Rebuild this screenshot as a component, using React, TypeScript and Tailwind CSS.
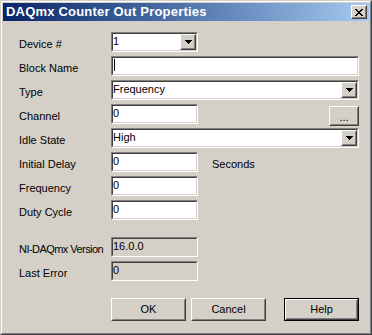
import React from "react";

const FONT = "font-['Liberation_Sans',Arial,sans-serif]";

function Arrow() {
  return (
    <svg width="7" height="4" viewBox="0 0 7 4" shapeRendering="crispEdges">
      <rect x="0" y="0" width="7" height="1" fill="#000" />
      <rect x="1" y="1" width="5" height="1" fill="#000" />
      <rect x="2" y="2" width="3" height="1" fill="#000" />
      <rect x="3" y="3" width="1" height="1" fill="#000" />
    </svg>
  );
}

function CloseGlyph() {
  // classic 8x7 pixel "X"
  const rows = ["11000011", "01100110", "00111100", "00011000", "00111100", "01100110", "11000011"];
  return (
    <svg width="8" height="7" viewBox="0 0 8 7" shapeRendering="crispEdges">
      {rows.map((r, y) =>
        r.split("").map((c, x) => (c === "1" ? <rect key={`${x}-${y}`} x={x} y={y} width="1" height="1" fill="#000" /> : null))
      )}
    </svg>
  );
}

// sunken 3d field
function Field({ width, gray, children }: { width: string; gray?: boolean; children?: React.ReactNode }) {
  return (
    <div className={`${width} h-[20px] border border-t-[#808080] border-l-[#808080] border-b-white border-r-white`}>
      <div className={`h-full flex border border-t-[#404040] border-l-[#404040] border-b-[#D4D0C8] border-r-[#D4D0C8] ${gray ? "bg-[#D4D0C8]" : "bg-white"}`}>
        {children}
      </div>
    </div>
  );
}

function RaisedBox({ className, children }: { className?: string; children?: React.ReactNode }) {
  return (
    <div className={`border border-t-white border-l-white border-b-[#404040] border-r-[#404040] bg-[#D4D0C8] ${className ?? ""}`}>
      <div className="h-full w-full flex items-center justify-center border border-t-[#D4D0C8] border-l-[#D4D0C8] border-b-[#808080] border-r-[#808080]">
        {children}
      </div>
    </div>
  );
}

function Combo({ width, value }: { width: string; value: string }) {
  return (
    <Field width={width}>
      <span className="flex-1 text-[11px] leading-[13px] pt-[1px] text-black">{value}</span>
      <RaisedBox className="w-[16px] h-full">
        <Arrow />
      </RaisedBox>
    </Field>
  );
}

function Row({ label, children, labelClass }: { label: string; children: React.ReactNode; labelClass?: string }) {
  return (
    <div className="flex items-start h-[20px]">
      <div className={`w-[92px] shrink-0 pt-[6px] text-[11px] leading-[13px] text-black whitespace-nowrap ${labelClass ?? ""}`}>{label}</div>
      {children}
    </div>
  );
}

function Text({ children }: { children: React.ReactNode }) {
  return <span className="text-[11px] leading-[13px] pt-[1px] text-black">{children}</span>;
}

export default function App() {
  return (
    <div className={`w-[372px] h-[335px] ${FONT} border border-t-[#D4D0C8] border-l-[#D4D0C8] border-b-[#404040] border-r-[#404040]`}>
      <div className="h-full flex flex-col bg-[#D4D0C8] p-px border border-t-white border-l-white border-b-[#808080] border-r-[#808080]">
        {/* Title bar */}
        <div className="h-[18px] flex items-center bg-linear-to-r from-[#0A246A] to-[#A6CAF0] pl-[3px] pr-[2px]">
          <span className="flex-1 text-white font-bold text-[13px] leading-[18px] tracking-[0.2px]">DAQmx Counter Out Properties</span>
          <RaisedBox className="w-[16px] h-[14px]">
            <CloseGlyph />
          </RaisedBox>
        </div>

        {/* Content */}
        <div className="flex-1 flex flex-col pl-[16px] pt-[11px]">
          <div className="flex flex-col gap-[4px]">
            <Row label="Device #">
              <Combo width="w-[87px]" value="1" />
            </Row>
            <Row label="Block Name">
              <Field width="w-[248px]">
                <div className="w-px h-[12px] bg-black ml-[1px] mt-[1px]" />
              </Field>
            </Row>
            <Row label="Type">
              <Combo width="w-[248px]" value="Frequency" />
            </Row>
            <Row label="Channel">
              <Field width="w-[87px]">
                <Text>0</Text>
              </Field>
              <RaisedBox className="ml-[131px] mt-[2px] w-[30px] h-[20px]">
                <span className="text-[11px] leading-[13px] pt-[3px] text-black">...</span>
              </RaisedBox>
            </Row>
            <Row label="Idle State">
              <Combo width="w-[248px]" value="High" />
            </Row>
            <Row label="Initial Delay">
              <Field width="w-[87px]">
                <Text>0</Text>
              </Field>
              <span className="ml-[14px] pt-[6px] text-[11px] leading-[13px] text-black">Seconds</span>
            </Row>
            <Row label="Frequency">
              <Field width="w-[87px]">
                <Text>0</Text>
              </Field>
            </Row>
            <Row label="Duty Cycle">
              <Field width="w-[87px]">
                <Text>0</Text>
              </Field>
            </Row>
          </div>

          <div className="flex flex-col gap-[4px] mt-[17px]">
            <Row label="NI-DAQmx Version" labelClass="tracking-[-0.05em]">
              <Field width="w-[87px]" gray>
                <Text>16.0.0</Text>
              </Field>
            </Row>
            <Row label="Last Error">
              <Field width="w-[87px]" gray>
                <Text>0</Text>
              </Field>
            </Row>
          </div>

          {/* Buttons */}
          <div className="flex mt-[17px] pl-[92px]">
            <RaisedBox className="w-[75px] h-[23px]">
              <span className="text-[11px] text-black">OK</span>
            </RaisedBox>
            <RaisedBox className="ml-[5px] w-[75px] h-[23px]">
              <span className="text-[11px] text-black">Cancel</span>
            </RaisedBox>
            <div className="ml-[18px] w-[75px] h-[23px] border border-black">
              <RaisedBox className="w-full h-full">
                <span className="text-[11px] text-black">Help</span>
              </RaisedBox>
            </div>
          </div>
        </div>
      </div>
    </div>
  );
}
